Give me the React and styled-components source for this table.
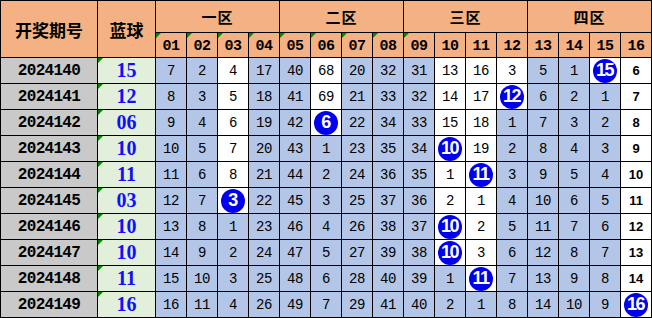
import React from 'react';
import styled, { createGlobalStyle, css } from 'styled-components';

const GlobalStyle = createGlobalStyle`
  html, body { margin: 0; padding: 0; background: #fff; }
`;

// H = hit (the drawn number, shown as a blue ball)
const H = null;
const rows = [
  { period: '2024140', blue: '15', vals: [7, 2, 4, 17, 40, 68, 20, 32, 31, 13, 16, 3, 5, 1, H, 6] },
  { period: '2024141', blue: '12', vals: [8, 3, 5, 18, 41, 69, 21, 33, 32, 14, 17, H, 6, 2, 1, 7] },
  { period: '2024142', blue: '06', vals: [9, 4, 6, 19, 42, H, 22, 34, 33, 15, 18, 1, 7, 3, 2, 8] },
  { period: '2024143', blue: '10', vals: [10, 5, 7, 20, 43, 1, 23, 35, 34, H, 19, 2, 8, 4, 3, 9] },
  { period: '2024144', blue: '11', vals: [11, 6, 8, 21, 44, 2, 24, 36, 35, 1, H, 3, 9, 5, 4, 10] },
  { period: '2024145', blue: '03', vals: [12, 7, H, 22, 45, 3, 25, 37, 36, 2, 1, 4, 10, 6, 5, 11] },
  { period: '2024146', blue: '10', vals: [13, 8, 1, 23, 46, 4, 26, 38, 37, H, 2, 5, 11, 7, 6, 12] },
  { period: '2024147', blue: '10', vals: [14, 9, 2, 24, 47, 5, 27, 39, 38, H, 3, 6, 12, 8, 7, 13] },
  { period: '2024148', blue: '11', vals: [15, 10, 3, 25, 48, 6, 28, 40, 39, 1, H, 7, 13, 9, 8, 14] },
  { period: '2024149', blue: '16', vals: [16, 11, 4, 26, 49, 7, 29, 41, 40, 2, 1, 8, 14, 10, 9, H] },
];

const zones = ['一区', '二区', '三区', '四区'];
const nums = Array.from({ length: 16 }, (_, i) => String(i + 1).padStart(2, '0'));

// last row in which each column was hit; cells down to it stay white
const lastHit = nums.map((_, c) => {
  let last = -1;
  rows.forEach((r, i) => { if (r.vals[c] === H) last = i; });
  return last;
});

const Grid = styled.div`
  display: grid;
  grid-template-columns: 96px 57px repeat(16, 30px);
  grid-template-rows: 31px 24px repeat(10, 25px);
  gap: 1px;
  padding: 1px;
  width: 652px;
  box-sizing: border-box;
  background: #000;
`;

const Cell = styled.div`
  position: relative;
  display: flex;
  align-items: center;
  justify-content: center;
  overflow: hidden;
`;

const marker = css`
  &::before {
    content: '';
    position: absolute;
    left: 0;
    top: 0;
    border-top: 5px solid #008a00;
    border-right: 5px solid transparent;
  }
`;

const HeadTitle = styled(Cell)`
  grid-row: span 2;
  background: #f4b183;
  font-family: "Noto Sans CJK SC", sans-serif;
  font-weight: 700;
  font-size: 17px;
  color: #000;
`;

const Zone = styled(Cell)`
  grid-column: span 4;
  background: #f4b183;
  font-family: "Noto Sans CJK SC", sans-serif;
  font-weight: 700;
  font-size: 15px;
  letter-spacing: 1px;
  color: #000;
`;

const NumHead = styled(Cell)`
  background: #f4b183;
  font-family: "Liberation Mono", monospace;
  font-weight: 700;
  font-size: 15px;
  letter-spacing: -0.5px;
  padding-top: 2px;
  ${(p) => p.$mark && marker}
`;

const Period = styled(Cell)`
  background: #c9c9c9;
  font-family: "Liberation Mono", monospace;
  font-weight: 700;
  font-size: 16px;
  letter-spacing: -0.7px;
`;

const Blue = styled(Cell)`
  background: #e2efda;
  font-family: "Liberation Serif", serif;
  font-weight: 700;
  font-size: 20px;
  color: #1010ff;
  ${marker}
`;

const Num = styled(Cell)`
  background: ${(p) => (p.$white ? '#fff' : '#b4c6e7')};
  font-family: ${(p) => (p.$last ? '"Liberation Sans", sans-serif' : '"Liberation Mono", monospace')};
  font-weight: ${(p) => (p.$last ? 600 : 400)};
  font-size: ${(p) => (p.$last ? '13px' : '14px')};
  letter-spacing: ${(p) => (p.$last ? '0' : '-0.5px')};
  color: #000;
`;

const Ball = styled.span`
  display: flex;
  align-items: center;
  justify-content: center;
  width: 24px;
  height: 24px;
  border-radius: 50%;
  background: #0000f0;
  color: #fff;
  font-family: "Liberation Sans", sans-serif;
  font-weight: 700;
  font-size: 18px;
  letter-spacing: -1.5px;
  padding-right: 1px;
  box-sizing: border-box;
`;

export default function App() {
  return (
    <>
      <GlobalStyle />
      <Grid>
        <HeadTitle>开奖期号</HeadTitle>
        <HeadTitle>蓝球</HeadTitle>
        {zones.map((z) => (
          <Zone key={z}>{z}</Zone>
        ))}
        {nums.map((n, i) => (
          <NumHead key={n} $mark={i < 9}>{n}</NumHead>
        ))}
        {rows.map((r, ri) => (
          <React.Fragment key={r.period}>
            <Period>{r.period}</Period>
            <Blue>{r.blue}</Blue>
            {r.vals.map((v, c) => (
              <Num key={c} $white={ri <= lastHit[c]} $last={c === 15}>
                {v === H ? <Ball>{nums[c].replace(/^0/, '')}</Ball> : v}
              </Num>
            ))}
          </React.Fragment>
        ))}
      </Grid>
    </>
  );
}
